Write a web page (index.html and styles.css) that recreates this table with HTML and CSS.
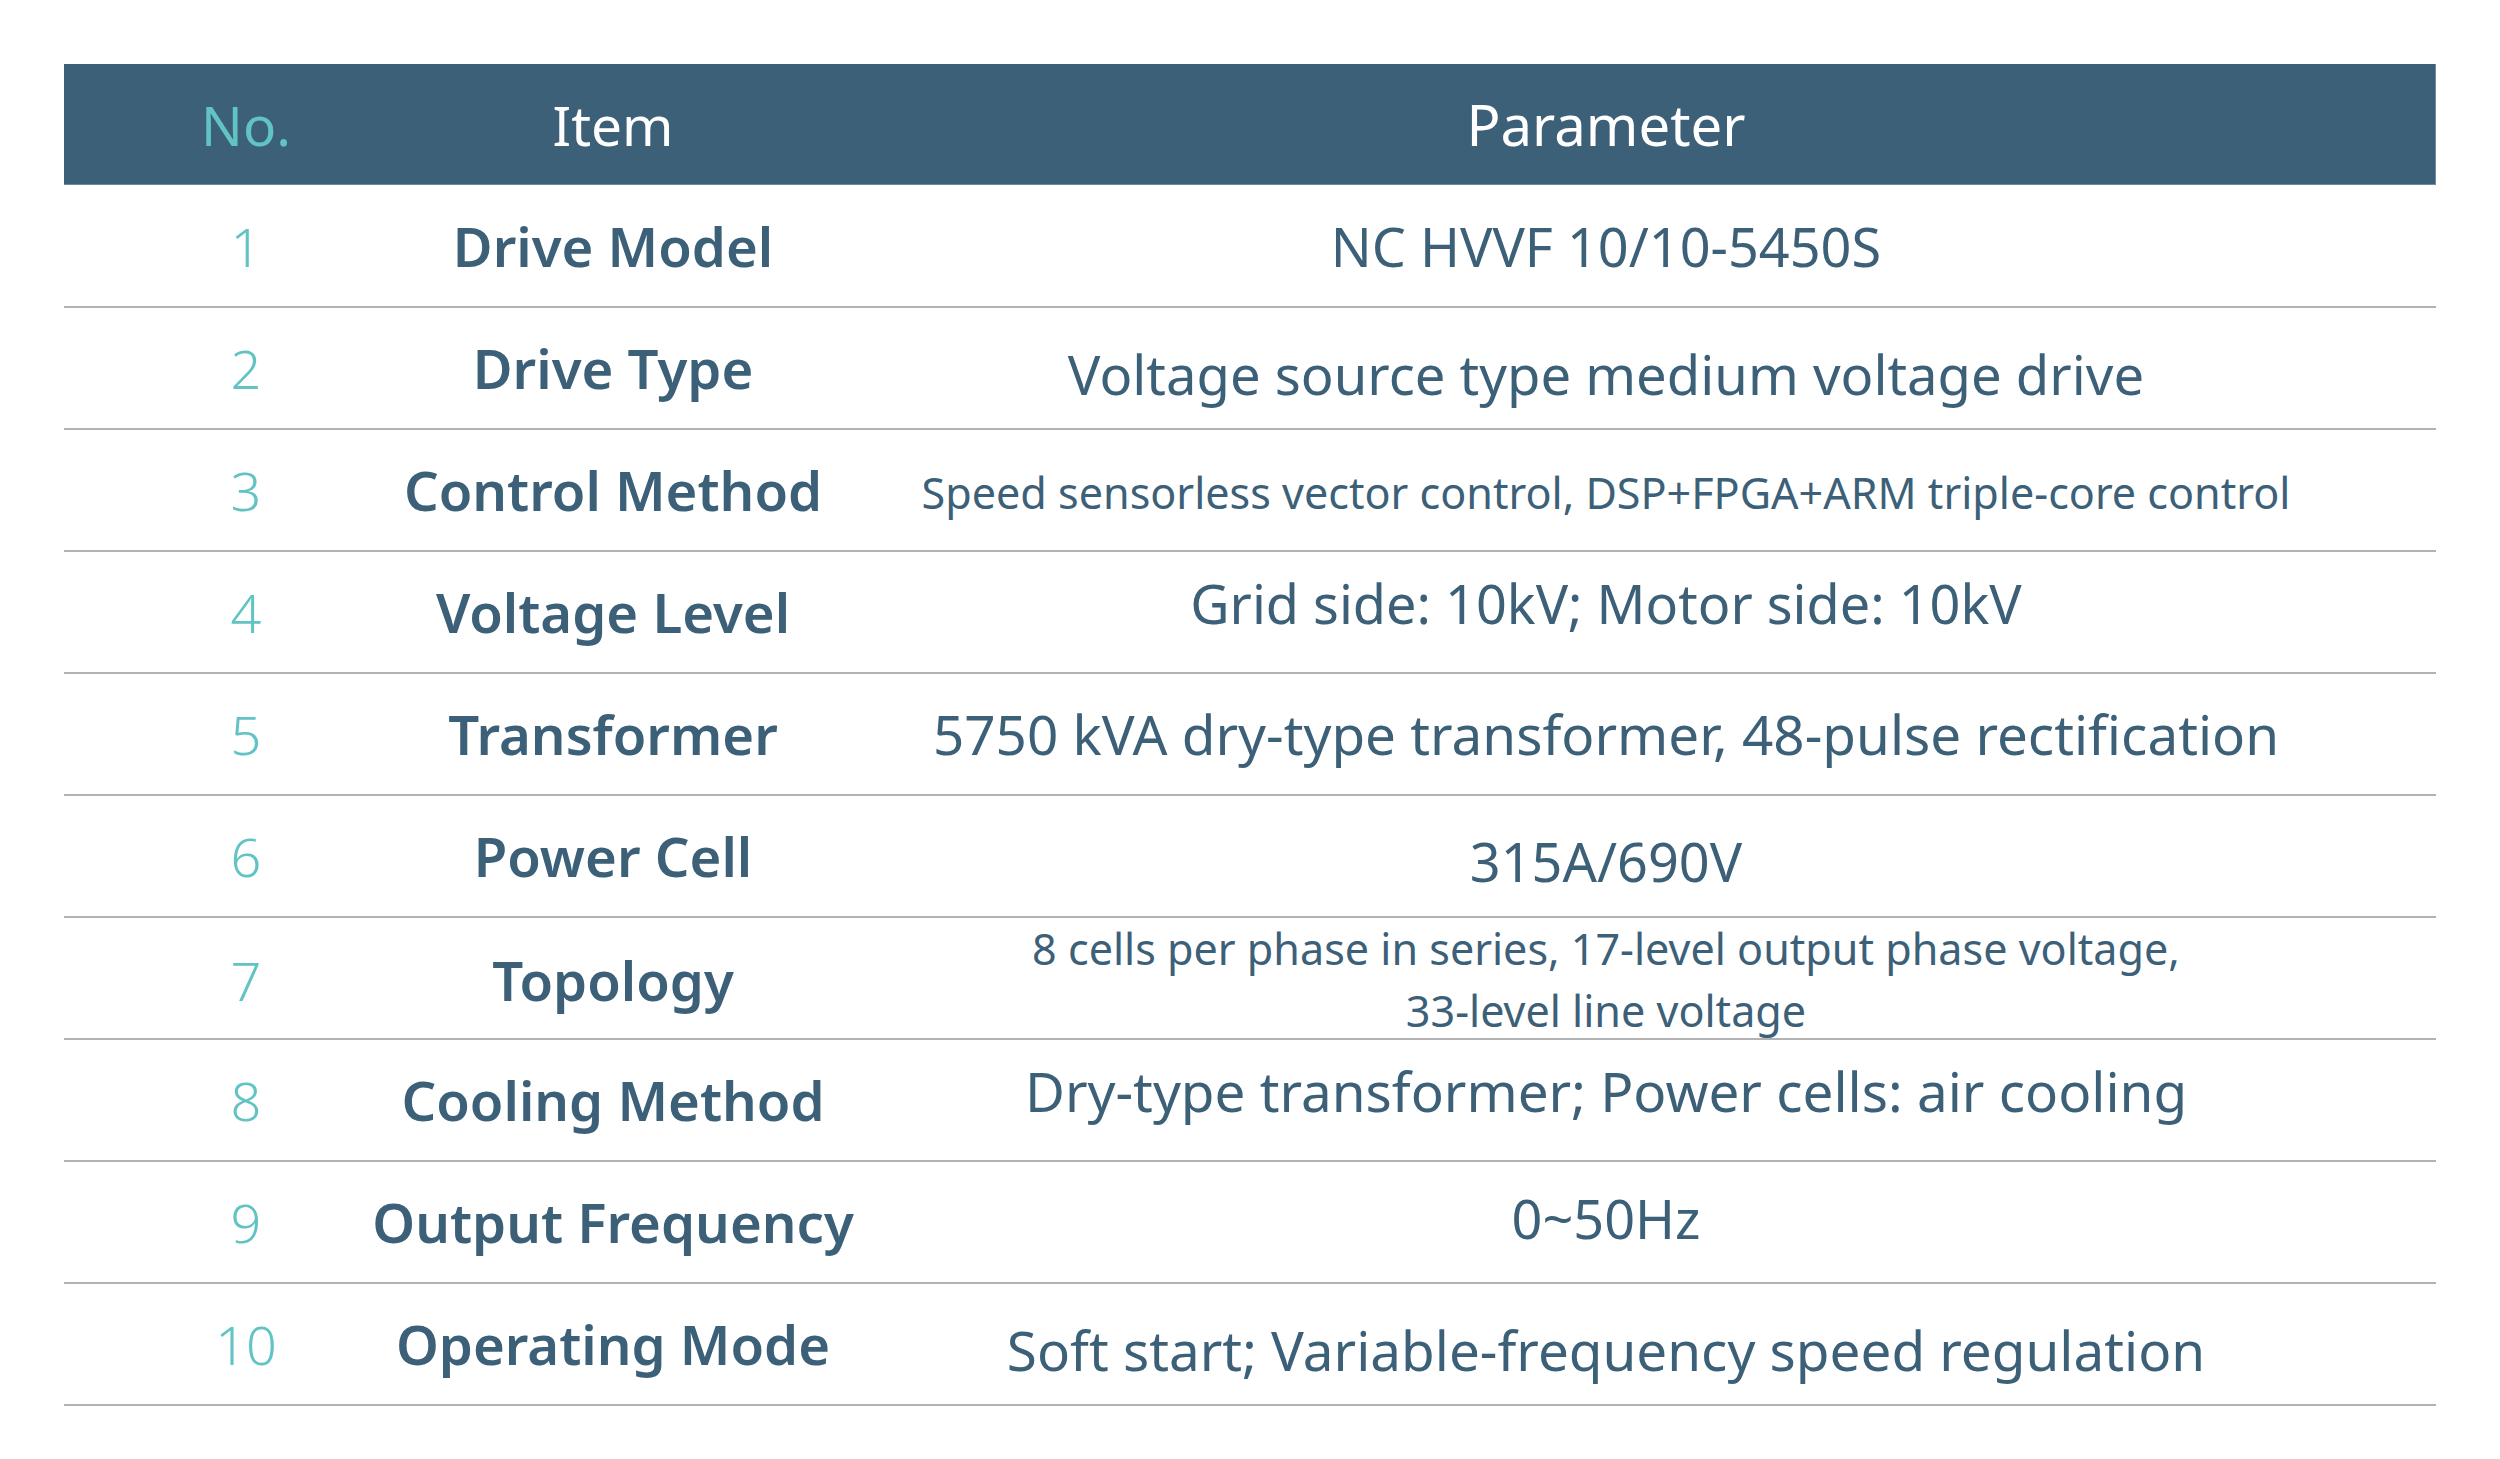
FILE: index.html
```html
<!DOCTYPE html>
<html lang="en">
<head>
<meta charset="utf-8">
<title>Drive Parameters</title>
<link rel="stylesheet" href="styles.css">
</head>
<body>
<div class="spec">
  <div class="row head">
    <div class="no">No.</div>
    <div class="item">Item</div>
    <div class="param">Parameter</div>
  </div>
  <div class="row">
    <div class="no">1</div>
    <div class="item">Drive Model</div>
    <div class="param s54">NC HVVF 10/10-5450S</div>
  </div>
  <div class="row">
    <div class="no">2</div>
    <div class="item">Drive Type</div>
    <div class="param s544 dn6">Voltage source type medium voltage drive</div>
  </div>
  <div class="row">
    <div class="no">3</div>
    <div class="item">Control Method</div>
    <div class="param s43 dn3">Speed sensorless vector control, DSP+FPGA+ARM triple-core control</div>
  </div>
  <div class="row">
    <div class="no">4</div>
    <div class="item">Voltage Level</div>
    <div class="param s54 up9">Grid side: 10kV; Motor side: 10kV</div>
  </div>
  <div class="row">
    <div class="no">5</div>
    <div class="item">Transformer</div>
    <div class="param s548">5750 kVA dry-type transformer, 48-pulse rectification</div>
  </div>
  <div class="row">
    <div class="no">6</div>
    <div class="item">Power Cell</div>
    <div class="param s54 dn5">315A/690V</div>
  </div>
  <div class="row">
    <div class="no">7</div>
    <div class="item">Topology</div>
    <div class="param s43 two">8 cells per phase in series, 17-level output phase voltage,<br>33-level line voltage</div>
  </div>
  <div class="row">
    <div class="no">8</div>
    <div class="item">Cooling Method</div>
    <div class="param s548 up9">Dry-type transformer; Power cells: air cooling</div>
  </div>
  <div class="row">
    <div class="no">9</div>
    <div class="item">Output Frequency</div>
    <div class="param s54 up4">0~50Hz</div>
  </div>
  <div class="row">
    <div class="no">10</div>
    <div class="item">Operating Mode</div>
    <div class="param s548 dn6">Soft start; Variable-frequency speed regulation</div>
  </div>
</div>
</body>
</html>
```

FILE: styles.css
```css
html, body {
  margin: 0;
  padding: 0;
  background: #ffffff;
}

body {
  font-family: "Noto Sans", "Open Sans", sans-serif;
  color: #3d6079;
}

.spec {
  margin: 64px 0 0 64px;
  width: 2372px;
}

.row {
  display: grid;
  grid-template-columns: 364px 370px 1fr;
  align-items: center;
  height: 120px;
  border-bottom: 2px solid #b2b2b2;
}

.row.head {
  height: 121px;
  margin-bottom: 1px;
  border-bottom: none;
  background: #3d6079;
  box-shadow: inset -1px -1px 0 #6f8ba0;
  color: #ffffff;
  font-size: 55px;
}

.no {
  text-align: center;
  color: #62c3c4;
  font-size: 54px;
  font-weight: 300;
  line-height: 1;
}

.head .no {
  font-weight: 400;
  font-size: 55px;
}

.item {
  display: flex;
  justify-content: center;
  white-space: nowrap;
  font-size: 54.5px;
  font-weight: 600;
  line-height: 1;
}

.head .item {
  font-weight: 400;
  font-size: 55px;
}

.param {
  text-align: center;
  padding-right: 22px;
  line-height: 1;
  font-weight: 400;
}

.head .param {
  font-size: 56.3px;
}

.param.two {
  line-height: 62px;
}

.s43 { font-size: 43.1px; }
.s54 { font-size: 54px; }
.s544 { font-size: 54.4px; }
.s548 { font-size: 54.8px; }

.dn3 { margin-top: 6px; }
.dn5 { margin-top: 10px; }
.dn6 { margin-top: 12px; }
.up4 { margin-bottom: 8px; }
.up9 { margin-bottom: 18px; }
```
